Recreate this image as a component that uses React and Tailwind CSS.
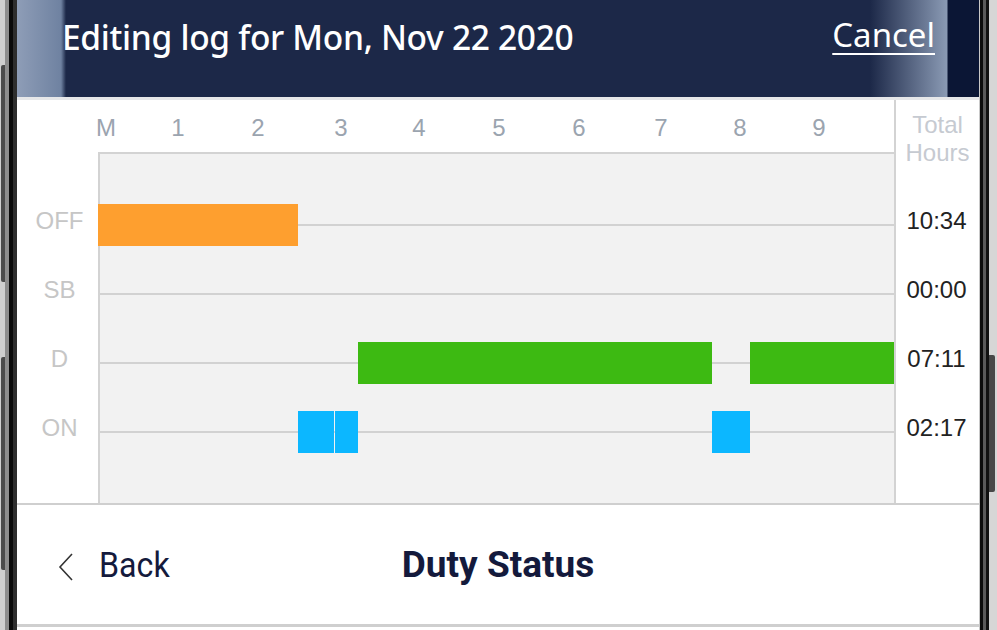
import React from "react";

const HOURS = ["M", "1", "2", "3", "4", "5", "6", "7", "8", "9"];
const HOUR_X = [8, 80, 160, 243, 321, 401, 481, 563, 642, 721];
const ROWS = [
  { label: "OFF", total: "10:34", bars: [{ l: 0, w: 200, c: "#fe9f2f" }] },
  { label: "SB", total: "00:00", bars: [] },
  {
    label: "D",
    total: "07:11",
    bars: [
      { l: 260, w: 354, c: "#3dba12" },
      { l: 652, w: 144, c: "#3dba12" },
    ],
  },
  {
    label: "ON",
    total: "02:17",
    bars: [
      { l: 200, w: 36, c: "#0cb7ff" },
      { l: 237, w: 23, c: "#0cb7ff" },
      { l: 614, w: 38, c: "#0cb7ff" },
    ],
  },
];

function LeftFrame() {
  return (
    <div className="flex h-full shrink-0">
      <div className="relative w-[5px] h-full bg-[#cfcfcf]">
        <div className="absolute left-[1px] top-[65px] h-[217px] w-[4px] rounded-l-[2px] bg-[#4b4b4b]" />
        <div className="absolute left-[1px] top-[357px] h-[213px] w-[4px] rounded-l-[2px] bg-[#4b4b4b]" />
      </div>
      <div className="w-[4px] h-full bg-[#8d8d8d]" />
      <div className="w-[4px] h-full bg-[#0a0a0a]" />
      <div className="w-[4px] h-full bg-[#2e2e2e]" />
    </div>
  );
}

function RightFrame() {
  return (
    <div className="flex h-full shrink-0">
      <div className="w-[1px] h-full bg-[#c9c9c9]" />
      <div className="w-[3px] h-full bg-[#0c0c0c]" />
      <div className="w-[3px] h-full bg-[#5a5a5a]" />
      <div className="w-[3px] h-full bg-[#111111]" />
      <div className="relative w-[8px] h-full bg-[#d6d6d6]">
        <div className="absolute left-0 top-[355px] h-[137px] w-[6px] rounded-r-[2px] bg-[#474747]" />
      </div>
    </div>
  );
}

export default function App() {
  return (
    <div className="flex w-[997px] h-[630px] overflow-hidden bg-white">
      <LeftFrame />
      <div className="flex flex-col w-[962px] h-full bg-white">
        {/* Header */}
        <div
          className="flex items-center justify-between h-[97px] pb-[21px] pl-[45px] pr-[44px] text-white bg-[linear-gradient(90deg,#8e9db7_0px,#6f82a1_44px,#1c2848_49px,#1c2848_853px,#8a9ab4_930px,#0b1635_931px)]"
          style={{ fontFamily: '"Noto Sans", sans-serif' }}
        >
          <div className="text-[33.5px] font-medium leading-none tracking-[-0.3px]">
            Editing log for Mon, Nov 22 2020
          </div>
          <div className="text-[33px] leading-none underline underline-offset-[6px] decoration-[2px] mb-[8px]">
            Cancel
          </div>
        </div>
        <div className="h-[3px] bg-[#e6e7e9]" />

        {/* Chart */}
        <div
          className="flex h-[403px]"
          style={{ fontFamily: '"Liberation Sans", Arial, sans-serif' }}
        >
          <div className="w-[81px] flex flex-col">
            <div className="h-[52px]" />
            <div className="pt-[38px]">
              {ROWS.map((r) => (
                <div
                  key={r.label}
                  className="h-[69px] flex items-center justify-center pb-[8px] pl-[4px] text-[24px] leading-none text-[#c6c6c6]"
                >
                  {r.label}
                </div>
              ))}
            </div>
          </div>

          <div className="w-[796px] flex flex-col">
            <div className="relative h-[52px]">
              {HOURS.map((h, i) => (
                <span
                  key={h}
                  className="absolute top-[16px] -translate-x-1/2 text-[24px] leading-none text-[#9ba4af]"
                  style={{ left: HOUR_X[i] }}
                >
                  {h}
                </span>
              ))}
            </div>
            <div className="h-[351px] bg-[#f2f2f2] border-l-2 border-t-2 border-[#d3d3d3] pt-[36px]">
              {ROWS.map((r) => (
                <div key={r.label} className="relative h-[69px]">
                  <div className="absolute left-0 right-0 top-[34px] h-[2px] bg-[#d2d2d2]" />
                  {r.bars.map((b, i) => (
                    <div
                      key={i}
                      className="absolute top-[14px] h-[42px]"
                      style={{ left: b.l - 2, width: b.w, backgroundColor: b.c }}
                    />
                  ))}
                </div>
              ))}
            </div>
          </div>

          <div className="w-[85px] flex flex-col border-l-2 border-[#d3d3d3] bg-white">
            <div className="h-[52px] flex flex-col items-center pt-[11px] text-[24px] leading-[28px] text-[#c6cad1]">
              <span>Total</span>
              <span>Hours</span>
            </div>
            <div className="pt-[38px]">
              {ROWS.map((r) => (
                <div
                  key={r.label}
                  className="h-[69px] flex items-center justify-center pb-[8px] pr-[2px] text-[24px] leading-none text-[#222222]"
                >
                  {r.total}
                </div>
              ))}
            </div>
          </div>
        </div>

        {/* Nav bar */}
        <div
          className="relative flex items-center h-[124px] border-t-2 border-b-[3px] border-[#cfcfcf] text-[#141a3c]"
          style={{ fontFamily: "Roboto, sans-serif" }}
        >
          <div className="flex items-center pl-[41px] gap-[25px]">
            <svg width="16" height="28" viewBox="0 0 16 28" className="mt-[4px]">
              <polyline
                points="14,1 2,14 14,27"
                fill="none"
                stroke="#333333"
                strokeWidth="1.6"
              />
            </svg>
            <span className="text-[35px] leading-none origin-left scale-x-[0.92] inline-block mt-[2px]">
              Back
            </span>
          </div>
          <div className="absolute inset-0 flex items-center justify-center">
            <span className="text-[37px] font-bold leading-none inline-block">
              Duty Status
            </span>
          </div>
        </div>
        <div className="h-[3px] bg-white" />
      </div>
      <RightFrame />
    </div>
  );
}
